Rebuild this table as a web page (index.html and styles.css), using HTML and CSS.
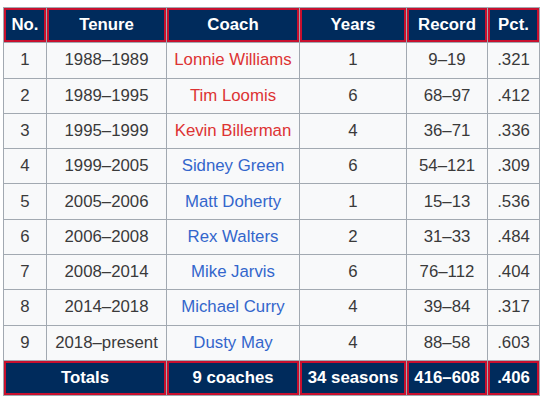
FILE: index.html
```html
<!DOCTYPE html>
<html>
<head>
<meta charset="utf-8">
<link rel="stylesheet" href="styles.css">
</head>
<body>
<table class="wikitable">
  <colgroup>
    <col class="c-no"><col class="c-ten"><col class="c-coach"><col class="c-yrs"><col class="c-rec"><col class="c-pct">
  </colgroup>
  <thead>
    <tr><th>No.</th><th>Tenure</th><th>Coach</th><th>Years</th><th>Record</th><th>Pct.</th></tr>
  </thead>
  <tbody>
    <tr><td>1</td><td>1988–1989</td><td><a class="new">Lonnie Williams</a></td><td>1</td><td>9–19</td><td>.321</td></tr>
    <tr><td>2</td><td>1989–1995</td><td><a class="new">Tim Loomis</a></td><td>6</td><td>68–97</td><td>.412</td></tr>
    <tr><td>3</td><td>1995–1999</td><td><a class="new">Kevin Billerman</a></td><td>4</td><td>36–71</td><td>.336</td></tr>
    <tr><td>4</td><td>1999–2005</td><td><a>Sidney Green</a></td><td>6</td><td>54–121</td><td>.309</td></tr>
    <tr><td>5</td><td>2005–2006</td><td><a>Matt Doherty</a></td><td>1</td><td>15–13</td><td>.536</td></tr>
    <tr><td>6</td><td>2006–2008</td><td><a>Rex Walters</a></td><td>2</td><td>31–33</td><td>.484</td></tr>
    <tr><td>7</td><td>2008–2014</td><td><a>Mike Jarvis</a></td><td>6</td><td>76–112</td><td>.404</td></tr>
    <tr><td>8</td><td>2014–2018</td><td><a>Michael Curry</a></td><td>4</td><td>39–84</td><td>.317</td></tr>
    <tr><td>9</td><td>2018–present</td><td><a>Dusty May</a></td><td>4</td><td>88–58</td><td>.603</td></tr>
  </tbody>
  <tfoot>
    <tr><th colspan="2">Totals</th><th>9 coaches</th><th>34 seasons</th><th>416–608</th><th>.406</th></tr>
  </tfoot>
</table>
</body>
</html>
```
FILE: styles.css
```css
html, body {
  margin: 0;
  background: #ffffff;
}
body {
  padding: 7px 0 0 3px;
  font-family: "Liberation Sans", Arial, sans-serif;
  font-size: 16.8px;
  color: #3a3a3a;
}
.wikitable {
  border-collapse: collapse;
  table-layout: fixed;
  width: 537px;
  background: #f8f9fa;
  border: 1px solid #a2a9b1;
}
.c-no { width: 43px; }
.c-ten { width: 120px; }
.c-coach { width: 133px; }
.c-yrs { width: 107px; }
.c-rec { width: 81px; }
.c-pct { width: 52px; }
.wikitable th,
.wikitable td {
  border: 1px solid #a2a9b1;
  padding: 4.15px 0;
  line-height: 26px;
  text-align: center;
  white-space: nowrap;
}
.wikitable th {
  background: #002b5c;
  color: #ffffff;
  font-weight: bold;
  box-shadow: inset 2px 2px 0 #c8102e, inset -2px -2px 0 #c8102e;
}
.wikitable a {
  color: #3366cc;
  text-decoration: none;
}
.wikitable a.new {
  color: #dd3333;
}
```
